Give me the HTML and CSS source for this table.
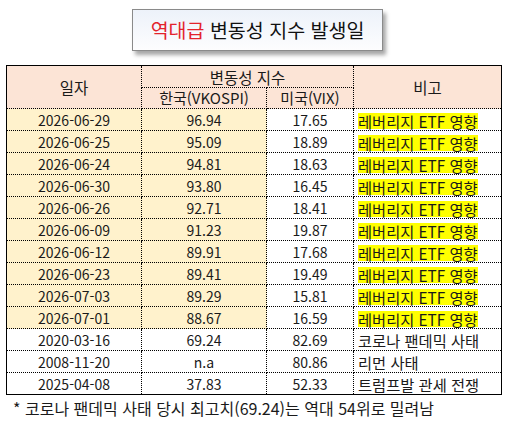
FILE: index.html
```html
<!DOCTYPE html>
<html lang="ko">
<head>
  <meta charset="UTF-8">
  <meta name="viewport" content="width=device-width, initial-scale=1.0">
  <title>역대급 변동성 지수 발생일</title>
  <link rel="stylesheet" href="styles.css">
</head>
<body>

  <!-- Title -->
  <div class="title-box">
    <span class="hot">역대급</span> 변동성 지수 발생일
  </div>

  <!-- Volatility table -->
  <table class="vol">
    <colgroup>
      <col class="c-date">
      <col class="c-kr">
      <col class="c-us">
      <col class="c-note">
    </colgroup>
    <thead>
      <tr class="h1">
        <th rowspan="2">일자</th>
        <th colspan="2">변동성 지수</th>
        <th rowspan="2">비고</th>
      </tr>
      <tr class="h2">
        <th>한국(VKOSPI)</th>
        <th>미국(VIX)</th>
      </tr>
    </thead>
    <tbody>
      <tr class="top"><td>2026-06-29</td><td>96.94</td><td>17.65</td><td><span class="mark">레버리지 ETF 영향</span></td></tr>
      <tr class="top"><td>2026-06-25</td><td>95.09</td><td>18.89</td><td><span class="mark">레버리지 ETF 영향</span></td></tr>
      <tr class="top"><td>2026-06-24</td><td>94.81</td><td>18.63</td><td><span class="mark">레버리지 ETF 영향</span></td></tr>
      <tr class="top"><td>2026-06-30</td><td>93.80</td><td>16.45</td><td><span class="mark">레버리지 ETF 영향</span></td></tr>
      <tr class="top"><td>2026-06-26</td><td>92.71</td><td>18.41</td><td><span class="mark">레버리지 ETF 영향</span></td></tr>
      <tr class="top"><td>2026-06-09</td><td>91.23</td><td>19.87</td><td><span class="mark">레버리지 ETF 영향</span></td></tr>
      <tr class="top"><td>2026-06-12</td><td>89.91</td><td>17.68</td><td><span class="mark">레버리지 ETF 영향</span></td></tr>
      <tr class="top"><td>2026-06-23</td><td>89.41</td><td>19.49</td><td><span class="mark">레버리지 ETF 영향</span></td></tr>
      <tr class="top"><td>2026-07-03</td><td>89.29</td><td>15.81</td><td><span class="mark">레버리지 ETF 영향</span></td></tr>
      <tr class="top"><td>2026-07-01</td><td>88.67</td><td>16.59</td><td><span class="mark">레버리지 ETF 영향</span></td></tr>
      <tr><td>2020-03-16</td><td>69.24</td><td>82.69</td><td>코로나 팬데믹 사태</td></tr>
      <tr><td>2008-11-20</td><td>n.a</td><td>80.86</td><td>리먼 사태</td></tr>
      <tr><td>2025-04-08</td><td>37.83</td><td>52.33</td><td>트럼프발 관세 전쟁</td></tr>
    </tbody>
  </table>

  <p class="footnote">* 코로나 팬데믹 사태 당시 최고치(69.24)는 역대 54위로 밀려남</p>

</body>
</html>
```

FILE: styles.css
```css
* { box-sizing: border-box; margin: 0; padding: 0; }

body {
  font-family: "Noto Sans CJK KR", "Noto Sans", sans-serif;
  color: #1a1a1a;
  background: #fff;
  padding-top: 9px;
}

/* — TITLE ————————————— */
.title-box {
  width: 251px;
  height: 42px;
  margin-left: 132px;
  border: 1px solid #8a8a8a;
  background: linear-gradient(#edf2fa, #fdfdfe);
  box-shadow: 3px 4px 4px rgba(0,0,0,0.35);
  font-size: 19.5px;
  line-height: 40px;
  text-align: center;
  color: #111;
}
.hot { color: #e3232c; }

/* — TABLE ————————————— */
.vol {
  margin: 14px 0 0 6px;
  width: 495px;
  border-collapse: collapse;
  border: 1px solid #000;
  table-layout: fixed;
  font-size: 14px;
}
.c-date { width: 135px; }
.c-kr   { width: 125px; }
.c-us   { width: 87px; }
.c-note { width: 148px; }

.vol th, .vol td {
  border: 1px dotted #000;
  height: 22px;
  line-height: 20px;
  text-align: center;
  font-weight: normal;
  padding: 0;
  white-space: nowrap;
}
.vol th { background: #fce4d6; font-size: 15px; }
.vol .h1 th { font-size: 15.5px; }
.vol .h2 th { height: 21px; }

.vol td:last-child {
  text-align: left;
  padding-left: 4px;
  font-size: 15.3px;
}
.vol tr.top td:nth-child(1),
.vol tr.top td:nth-child(2) { background: #fff2cc; }

.mark {
  display: inline-block;
  background: #ffff00;
  line-height: 15px;
  padding-top: 1px;
  vertical-align: -1px;
}

/* — FOOTNOTE ————————————— */
.footnote {
  font-size: 16px;
  line-height: 26px;
  padding-left: 13px;
}
```
